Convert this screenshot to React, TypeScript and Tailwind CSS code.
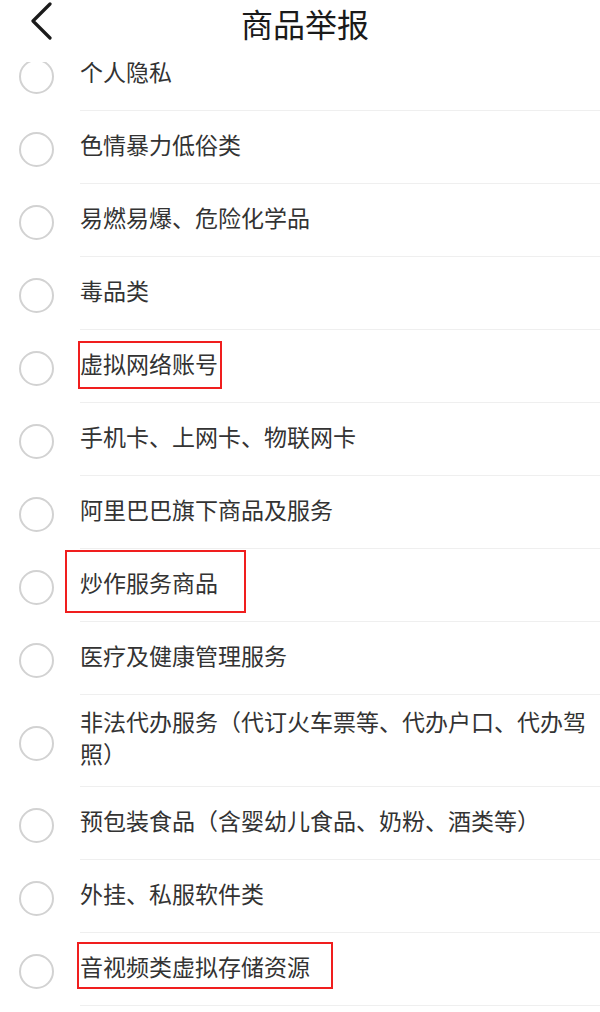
import React from "react";

type Item = {
  label: string;
  box?: { left: number; top: number; width: number; height: number };
};

const items: Item[] = [
  { label: "个人隐私" },
  { label: "色情暴力低俗类" },
  { label: "易燃易爆、危险化学品" },
  { label: "毒品类" },
  { label: "虚拟网络账号", box: { left: -2, top: 11, width: 144, height: 48 } },
  { label: "手机卡、上网卡、物联网卡" },
  { label: "阿里巴巴旗下商品及服务" },
  { label: "炒作服务商品", box: { left: -15, top: 1, width: 181, height: 63 } },
  { label: "医疗及健康管理服务" },
  { label: "非法代办服务（代订火车票等、代办户口、代办驾照）" },
  { label: "预包装食品（含婴幼儿食品、奶粉、酒类等）" },
  { label: "外挂、私服软件类" },
  { label: "音视频类虚拟存储资源", box: { left: -3, top: 9, width: 256, height: 47 } },
];

export default function App() {
  return (
    <div
      className="w-[600px] h-[1012px] overflow-hidden bg-white relative"
      style={{ fontFamily: '"Noto Sans CJK SC", "Noto Sans", sans-serif' }}
    >
      <header className="relative z-10 h-[62px] bg-white flex items-start">
        <div className="w-[80px] h-[40px] flex items-start pl-[30px] pt-[2px]">
          <svg width="24" height="38" viewBox="0 0 24 38" fill="none">
            <path
              d="M20 2 L3 19 L20 36"
              stroke="#1a1a1a"
              strokeWidth="3.2"
              strokeLinecap="round"
              strokeLinejoin="round"
            />
          </svg>
        </div>
        <div className="flex-1 flex justify-center pr-[70px]">
          <h1 className="text-[32px] leading-[46px] text-[#1a1a1a] font-normal">商品举报</h1>
        </div>
      </header>
      <ul className="-mt-[24px]">
        {items.map((it, i) => (
          <li key={i} className="flex min-h-[73px]">
            <div className="w-[80px] shrink-0 flex items-center pl-[19px]">
              <span className="block w-[35px] h-[35px] rounded-full border-2 border-[#d2d2d2] translate-y-[2px]" />
            </div>
            <div className="relative flex-1 flex items-center border-b border-[#efefef] pt-[12px] pb-[15px] pr-[8px]">
              <span className="text-[23px] leading-[32px] text-[#333333] -translate-y-[2px]">{it.label}</span>
              {it.box && (
                <span
                  className="absolute border-2 border-[#f01e1e] pointer-events-none"
                  style={{
                    left: it.box.left,
                    top: it.box.top,
                    width: it.box.width,
                    height: it.box.height,
                  }}
                />
              )}
            </div>
          </li>
        ))}
      </ul>
    </div>
  );
}
